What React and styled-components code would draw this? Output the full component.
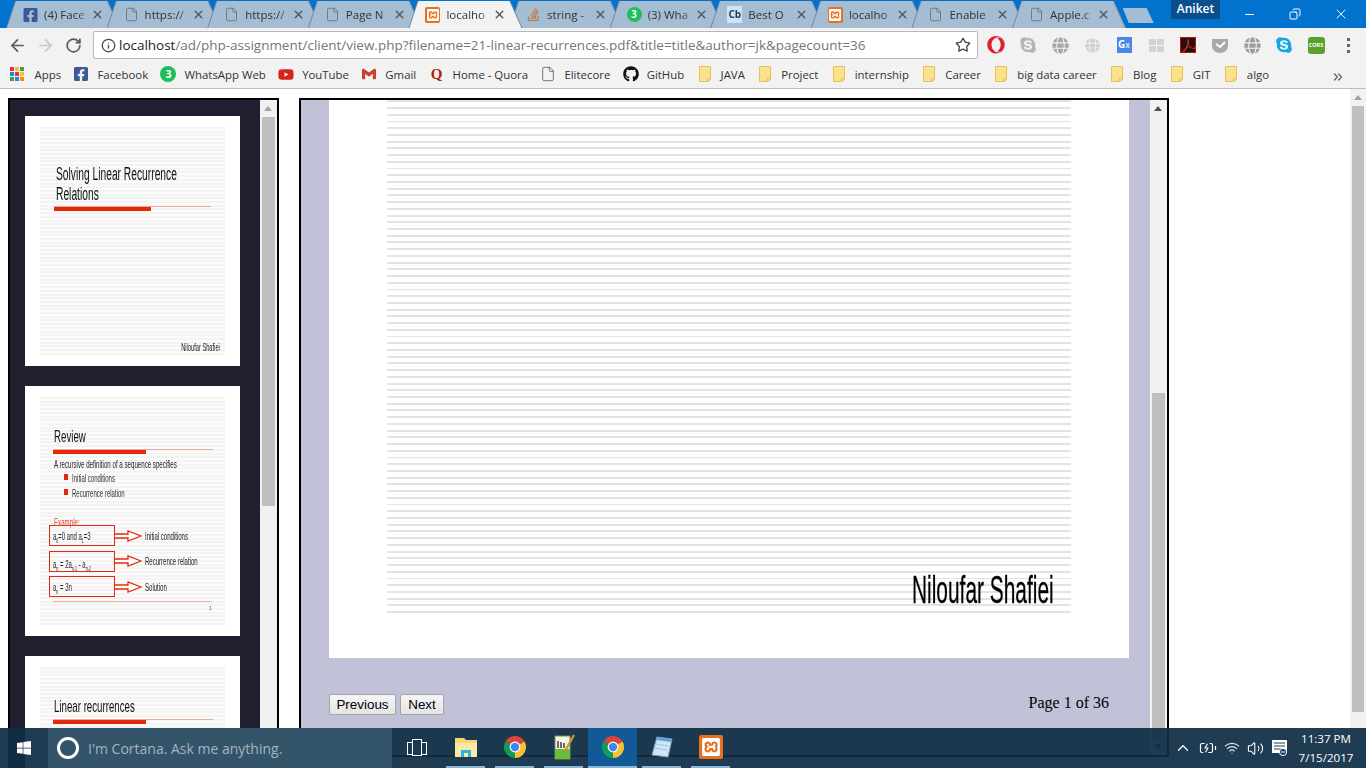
import styled, { createGlobalStyle } from 'styled-components';
import { ArrowLeft, ArrowRight, RotateCw, Info, Star, X, File, ChevronUp, ChevronsRight, Wifi, Volume2, Minus, Copy, BatteryCharging } from 'lucide-react';
import { FaFacebookSquare, FaStackOverflow, FaYoutube, FaGithub, FaOpera, FaSkype, FaGlobe, FaWindows, FaThLarge } from 'react-icons/fa';
import { SiXampp, SiAdobeacrobatreader, SiGmail } from 'react-icons/si';

const UI_FONT = '"Open Sans", "Noto Sans", sans-serif';

const GlobalStyle = createGlobalStyle`
	html, body {
		margin: 0;
		overflow: hidden;
		background: #fff;
	}
	* {
		box-sizing: border-box;
	}
`;

const Screen = styled.div`
	position: relative;
	width: 1366px;
	height: 768px;
	overflow: hidden;
	background: #fff;
	font-family: ${UI_FONT};
`;

// Tab strip
const TabStrip = styled.div`
	position: relative;
	display: flex;
	align-items: flex-end;
	height: 28px;
	padding-left: 7px;
	background: #0173cf;
`;

const TabShape = styled.div`
	position: relative;
	z-index: ${(p) => (p.$active ? 2 : 1)};
	width: 112px;
	margin-right: -11.4px;
	filter: drop-shadow(1px 0 0 #70869b) drop-shadow(-1px 0 0 #70869b);
`;

const Tab = styled.div`
	display: flex;
	align-items: center;
	height: 27px;
	padding-left: 16px;
	background: ${(p) => (p.$active ? '#f2f2f2' : '#a4bdd3')};
	clip-path: polygon(9px 0, 100px 0, 112px 100%, 0 100%);
`;

const TabIcon = styled.span`
	display: flex;
	align-items: center;
	justify-content: center;
	width: 15px;
	height: 16px;
	margin-right: 6px;
`;

const TabTitle = styled.span`
	width: 43px;
	margin-right: 4px;
	font-size: 11.5px;
	color: #333;
	white-space: nowrap;
	mask-image: linear-gradient(to right, #000 78%, rgba(0, 0, 0, 0.25) 100%);
`;

const NewTab = styled.div`
	width: 31px;
	height: 15px;
	margin: 0 0 5px 9px;
	align-self: flex-end;
	background: #a4bdd3;
	clip-path: polygon(0 0, 24px 0, 100% 100%, 6px 100%);
`;

const Profile = styled.div`
	position: absolute;
	top: 0;
	left: 1171px;
	width: 49px;
	height: 19px;
	background: #0a4f8c;
	font-size: 12px;
	font-weight: 600;
	line-height: 18px;
	text-align: center;
	color: #fff;
`;

const WindowControls = styled.div`
	position: absolute;
	top: 6px;
	left: 1243px;
	display: flex;
	align-items: center;
	gap: 33px;
	svg:nth-child(2) {
		transform: scaleX(-1);
		margin-right: -1px;
	}
`;

// Toolbar
const Toolbar = styled.div`
	display: flex;
	align-items: center;
	height: 34px;
	padding-left: 3px;
	background: #f2f2f2;
`;

const NavButton = styled.span`
	display: flex;
	align-items: center;
	justify-content: center;
	width: 28px;
`;

const UrlBox = styled.div`
	display: flex;
	align-items: center;
	width: 885px;
	height: 28px;
	margin-left: 6px;
	padding: 0 6px 0 7px;
	background: #fff;
	border: 1px solid #b9b9b9;
	border-radius: 2px;
`;

const UrlText = styled.div`
	flex: 1;
	margin-left: 3px;
	font-size: 13.48px;
	color: #757575;
	white-space: nowrap;
	b {
		font-weight: 400;
		color: #222;
	}
`;

const Extensions = styled.div`
	display: flex;
	align-items: center;
	margin-left: 2px;
`;

const Extension = styled.span`
	display: flex;
	align-items: center;
	justify-content: center;
	width: 32px;
	height: 20px;
`;

const TranslateBadge = styled.span`
	width: 15px;
	height: 16px;
	background: #4a86e8;
	font-size: 10px;
	font-weight: 700;
	line-height: 14px;
	text-align: center;
	color: #fff;
	small {
		font-size: 8px;
		color: #ddd;
	}
`;

const AdobeBadge = styled.span`
	display: flex;
	align-items: center;
	justify-content: center;
	width: 16px;
	height: 16px;
	background: #2b0d0d;
	border: 1px solid #b3180f;
`;

const CorsBadge = styled.span`
	width: 17px;
	height: 17px;
	background: #5aa02c;
	border-radius: 3px;
	font-size: 5.5px;
	font-weight: 700;
	line-height: 17px;
	text-align: center;
	color: #fff;
`;

const MenuDots = styled.span`
	display: flex;
	flex-direction: column;
	align-items: center;
	gap: 3px;
	width: 32px;
	i {
		width: 3px;
		height: 3px;
		background: #666;
	}
`;

// Bookmarks
const BookmarkBar = styled.div`
	position: relative;
	display: flex;
	align-items: center;
	gap: 12.35px;
	height: 27px;
	padding: 0 0 2px 9.5px;
	background: #f2f2f2;
	border-bottom: 1px solid #bdbdbd;
`;

const Bookmark = styled.div`
	display: flex;
	align-items: center;
	gap: 8px;
	font-size: 11.4px;
	color: #333;
	white-space: nowrap;
`;

const BookmarkIcon = styled.span`
	display: flex;
	align-items: center;
	justify-content: center;
	width: 16px;
	height: 16px;
`;

const AppsGrid = styled.span`
	display: grid;
	grid-template-columns: repeat(3, 4px);
	gap: 1px;
	width: 16px;
	margin-right: 1px;
`;

const AppDot = styled.i`
	width: 4px;
	height: 4px;
	background: ${(p) => p.$color};
`;

const MoreBookmarks = styled.span`
	position: absolute;
	top: 5px;
	left: 1331px;
`;

const QuoraMark = styled.span`
	font-family: "Liberation Serif", serif;
	font-size: 15px;
	font-weight: 700;
	line-height: 16px;
	color: #a82400;
`;

const WhatsBadge = styled.span`
	display: inline-block;
	width: ${(p) => p.$size}px;
	height: ${(p) => p.$size}px;
	background: #1ebe5d;
	border-radius: 50%;
	font-size: 10px;
	font-weight: 700;
	line-height: ${(p) => p.$size}px;
	text-align: center;
	color: #fff;
`;

const CbBadge = styled.span`
	display: inline-block;
	width: 15px;
	height: 17px;
	background: #cfe3f5;
	font-size: 10px;
	font-weight: 700;
	line-height: 17px;
	text-align: center;
	color: #1c3d5a;
`;

const XamppBadge = styled.span`
	display: flex;
	align-items: center;
	justify-content: center;
	width: ${(p) => p.$size}px;
	height: ${(p) => p.$size}px;
	background: #e8701e;
	border-radius: 2px;
`;

// Page body
const Page = styled.div`
	display: flex;
	height: 679px;
`;

const Frames = styled.div`
	display: flex;
	flex: 1;
	gap: 20px;
	padding: 9px 0 0 8px;
`;

const ThumbFrame = styled.div`
	display: flex;
	flex-shrink: 0;
	width: 271px;
	height: 670px;
	border: solid #000;
	border-width: 2px 2px 0;
`;

const Thumbs = styled.div`
	display: flex;
	flex: 1;
	flex-direction: column;
	gap: 20px;
	padding: 16px 0 0 15px;
	overflow: hidden;
	background: #1f1f2f;
`;

const Slide = styled.div`
	flex-shrink: 0;
	width: 215px;
	height: 250px;
	padding: 11px 15px;
	background: #fff;
`;

const SlideLines = styled.div`
	display: flex;
	flex-direction: column;
	align-items: flex-start;
	height: 228px;
	padding-left: 14px;
	background: repeating-linear-gradient(to bottom, #f3f3f3 0 2px, #fbfbfb 2px 3.7px);
	filter: blur(0.25px);
`;

const Squeezed = styled.span`
	display: inline-block;
	white-space: nowrap;
	transform: scaleX(0.57);
	transform-origin: ${(p) => p.$origin || 'left'} center;
	sub {
		font-size: 60%;
		line-height: 0;
	}
`;

const SlideTitle = styled.div`
	height: 20px;
	margin: ${(p) => p.$top || 0}px 0 0 ${(p) => p.$left || 0}px;
	font-family: "Liberation Sans", Arial, sans-serif;
	font-size: ${(p) => p.$size || 18}px;
	line-height: 20px;
	color: #111;
`;

const Rule = styled.div`
	position: relative;
	flex-shrink: 0;
	width: ${(p) => p.$width}px;
	height: 5px;
	margin: 2px 0 0 ${(p) => p.$left || 0}px;
	border-top: 1px solid #eea99b;
	&::after {
		content: '';
		position: absolute;
		top: 0;
		left: 0;
		width: ${(p) => p.$red}px;
		height: 4px;
		background: #e3290c;
	}
`;

const Author = styled.div`
	align-self: flex-end;
	margin: auto 5px 1px 0;
	font-family: "Liberation Sans", Arial, sans-serif;
	font-size: 10px;
	line-height: 12px;
	color: #222;
`;

const SlideBody = styled.div`
	height: 12px;
	margin-top: 4px;
	font-family: "Liberation Sans", Arial, sans-serif;
	font-size: 10.8px;
	line-height: 12px;
	color: #222;
`;

const Bullet = styled.div`
	position: relative;
	height: 15px;
	margin-left: 18px;
	padding-top: 1px;
	font-family: "Liberation Sans", Arial, sans-serif;
	font-size: 10.6px;
	line-height: 14px;
	color: #333;
	&::before {
		content: '';
		position: absolute;
		top: 4px;
		left: -8px;
		width: 3.5px;
		height: 6px;
		background: #e3290c;
	}
`;

const ExampleLabel = styled.div`
	height: 12px;
	margin-top: 16px;
	font-family: "Liberation Sans", Arial, sans-serif;
	font-size: 10.8px;
	line-height: 12px;
	color: #e8452a;
`;

const Diagram = styled.div`
	display: flex;
	flex-direction: column;
	gap: 4.5px;
	margin: -3px 0 0 -5px;
`;

const DiagramRow = styled.div`
	display: flex;
	align-items: center;
`;

const FormulaBox = styled.div`
	display: flex;
	align-items: ${(p) => (p.$low ? 'flex-end' : 'center')};
	width: 66px;
	height: 21px;
	padding: 0 0 0 3px;
	border: 1.4px solid #e3290c;
	font-family: "Liberation Sans", Arial, sans-serif;
	font-size: 10.5px;
	line-height: 14px;
	color: #222;
`;

const DiagramLabel = styled.div`
	margin-left: 3px;
	font-family: "Liberation Sans", Arial, sans-serif;
	font-size: 10.6px;
	color: #222;
`;

const FootRule = styled.div`
	flex-shrink: 0;
	width: 159px;
	height: 1px;
	margin: 4px 0 0 -1px;
	background: #efb5a9;
`;

const SlideNumber = styled.div`
	margin: 2px 0 0 155px;
	font-family: "Liberation Sans", Arial, sans-serif;
	font-size: 5px;
	line-height: 8px;
	color: #555;
`;

// Scrollbars
const Scrollbar = styled.div`
	display: flex;
	flex-direction: column;
	flex-shrink: 0;
	width: 17px;
	background: #f1f1f1;
`;

const PageScrollbar = styled(Scrollbar)`
	width: 16px;
`;

const ArrowUp = styled.div`
	position: relative;
	flex-shrink: 0;
	height: 17px;
	&::after {
		content: '';
		position: absolute;
		top: 6px;
		left: 4px;
		border: 4px solid transparent;
		border-top: 0;
		border-bottom: 5px solid ${(p) => (p.$dark ? '#505050' : '#a3a3a3')};
	}
`;

const ArrowDown = styled.div`
	position: relative;
	flex-shrink: 0;
	height: 17px;
	&::after {
		content: '';
		position: absolute;
		top: 6px;
		left: 4px;
		border: 4px solid transparent;
		border-bottom: 0;
		border-top: 5px solid #505050;
	}
`;

const ScrollTrack = styled.div`
	flex: 1;
	padding: 0 2px;
	overflow: hidden;
`;

const ScrollThumb = styled.div`
	height: ${(p) => p.$height}px;
	margin-top: ${(p) => p.$top}px;
	background: #bfbfbf;
`;

// Viewer
const ViewerFrame = styled.div`
	display: flex;
	flex-shrink: 0;
	width: 870px;
	height: 659px;
	border: 2px solid #000;
`;

const Viewer = styled.div`
	flex: 1;
	padding: 0 21px 0 28px;
	background: #c1c1d7;
`;

const PdfPage = styled.div`
	width: 800px;
	height: 558px;
	padding: 0 58px;
	background: #fff;
`;

const PdfLines = styled.div`
	display: flex;
	align-items: flex-end;
	justify-content: flex-end;
	height: 512.5px;
	padding: 0 17px 5px 0;
	background: repeating-linear-gradient(to top, #e3e3e3 0 1.9px, #fff 1.9px 6.72px);
`;

const PdfAuthor = styled.div`
	font-family: "Liberation Sans", Arial, sans-serif;
	font-size: 38px;
	line-height: 36px;
	color: #000;
	white-space: nowrap;
	-webkit-text-stroke: 0.3px #000;
	transform: scaleX(0.55);
	transform-origin: right center;
`;

const Pager = styled.div`
	display: flex;
	align-items: flex-start;
	justify-content: space-between;
	margin-top: 36px;
	padding-right: 20px;
`;

const PagerButtons = styled.div`
	display: flex;
	gap: 4px;
`;

const PagerButton = styled.button`
	width: ${(p) => p.$width}px;
	height: 21px;
	padding: 0;
	background: linear-gradient(#f6f6f6, #e4e4e4);
	border: 1px solid #a5a5a5;
	border-radius: 2px;
	font-family: "Liberation Sans", Arial, sans-serif;
	font-size: 13.4px;
	line-height: 17px;
	color: #000;
`;

const PageCount = styled.div`
	font-family: "Liberation Serif", "Times New Roman", serif;
	font-size: 16px;
	line-height: 18px;
	color: #000;
`;

// Windows taskbar, sits over the bottom of the page
const Taskbar = styled.div`
	position: absolute;
	left: 0;
	right: 0;
	bottom: 0;
	display: flex;
	align-items: stretch;
	height: 40px;
	background: rgba(15, 45, 69, 0.93);
`;

const StartButton = styled.div`
	display: flex;
	align-items: center;
	justify-content: center;
	width: 48px;
`;

const SearchBox = styled.div`
	display: flex;
	align-items: center;
	gap: 9px;
	width: 344px;
	padding-left: 9px;
	background: #34546a;
	font-size: 14px;
	color: #a3b5c0;
`;

const CortanaRing = styled.span`
	width: 22px;
	height: 22px;
	border: 3px solid #fff;
	border-radius: 50%;
`;

const TaskItem = styled.div`
	position: relative;
	display: flex;
	align-items: center;
	justify-content: center;
	width: 49px;
	padding-bottom: 2px;
	background: ${(p) => (p.$active ? '#115a95' : 'transparent')};
	&::after {
		content: '';
		display: ${(p) => (p.$running ? 'block' : 'none')};
		position: absolute;
		left: ${(p) => (p.$active ? 0 : 5)}px;
		right: ${(p) => (p.$active ? 0 : 5)}px;
		bottom: 0;
		height: 2px;
		background: #8ab6dc;
	}
`;

const TaskView = styled.span`
	position: relative;
	width: 10px;
	height: 17px;
	border: 1px solid #fff;
	&::before,
	&::after {
		content: '';
		position: absolute;
		top: 2px;
		width: 4px;
		height: 11px;
		border: 1px solid #fff;
	}
	&::before {
		left: -6px;
		border-right: 0;
	}
	&::after {
		right: -6px;
		border-left: 0;
	}
`;

const Tray = styled.div`
	display: flex;
	align-items: center;
	gap: 7px;
	margin-left: auto;
`;

const Clock = styled.div`
	display: flex;
	flex-direction: column;
	align-items: center;
	justify-content: center;
	width: 74px;
	margin-left: 4px;
	padding-right: 6px;
	font-size: 11.6px;
	line-height: 19px;
	color: #fff;
`;

// Small logos
const Chrome = ({ size = 24 }) => (
	<svg width={size} height={size} viewBox="0 0 24 24">
		<path d="M12 12 L2.47 6.5 A11 11 0 0 1 21.53 6.5Z" fill="#db4437" />
		<path d="M12 12 L21.53 6.5 A11 11 0 0 1 12 23Z" fill="#fbc02d" />
		<path d="M12 12 L12 23 A11 11 0 0 1 2.47 6.5Z" fill="#0f9d58" />
		<circle cx="12" cy="12" r="5.4" fill="#fff" />
		<circle cx="12" cy="12" r="4.2" fill="#4285f4" />
	</svg>
);

const Folder = () => (
	<svg width="12" height="16" viewBox="0 0 12 16">
		<path d="M.5.5h11v13l-2 2h-9z" fill="#fde08a" stroke="#e0c060" />
		<path d="M8.5 15.5v-3h3" fill="none" stroke="#e0c060" />
	</svg>
);

const Explorer = () => (
	<svg width="24" height="24" viewBox="0 0 24 24">
		<path d="M1 3h9l2 2h11v17H1z" fill="#f7d774" />
		<path d="M1 8h22v14H1z" fill="#fbe9a6" />
		<path d="M7 22v-7h10v7h-3v-4h-4v4z" fill="#25b6e8" />
	</svg>
);

const NotepadPlus = () => (
	<svg width="24" height="26" viewBox="0 0 24 26">
		<path d="M3 2h15v23H3z" fill="#f3f7e6" stroke="#7a8a60" />
		<path d="M3 15h15v10H3z" fill="#6dbb3a" />
		<path d="M6 7v7M9 8v6M12 9v5" stroke="#333" strokeWidth="1.4" />
		<path d="M22 1L13 17" stroke="#c9962c" strokeWidth="2.4" />
	</svg>
);

const Notepad = () => (
	<svg width="24" height="24" viewBox="0 0 24 24">
		<path d="M7 2l15 2-4 18L2 20z" fill="#cfe6f5" stroke="#7aa4c0" />
		<path d="M7 2l15 2-1 3L6 5z" fill="#5da7d8" />
		<path d="M6 9l12 2M5 13l12 2" stroke="#9cc0d8" />
	</svg>
);

const Pocket = () => (
	<svg width="18" height="18" viewBox="0 0 18 18">
		<path d="M1 3h16v7a8 7 0 0 1-16 0z" fill="#a9a9a9" />
		<path d="M5 8l4 3 5-5" fill="none" stroke="#fff" strokeWidth="2" />
	</svg>
);

const NoticeIcon = () => (
	<svg width="17" height="18" viewBox="0 0 17 18">
		<path d="M1 1h15v13H1z" fill="#fff" />
		<path d="M3 4h11M3 7h11M3 10h7" stroke="#1f3d5a" />
		<circle cx="12" cy="13" r="3.6" fill="#1f3d5a" stroke="#fff" />
		<path d="M10 13h4" stroke="#fff" />
	</svg>
);

const APP_COLORS = ['#e53935', '#fbc02d', '#43a047', '#1e88e5', '#e53935', '#fbc02d', '#43a047', '#1e88e5', '#fb8c00'];

const pageIcon = <File size={15} color="#666" strokeWidth={1.2} />;
const xamppIcon = <XamppBadge $size={16}><SiXampp size={12} color="#fff" /></XamppBadge>;

// Titles are what the narrow tabs leave visible
const TABS = [
	{ title: '(4) Face', icon: <FaFacebookSquare size={16} color="#3b5998" /> },
	{ title: 'https://', icon: pageIcon },
	{ title: 'https://', icon: pageIcon },
	{ title: 'Page N', icon: pageIcon },
	{ title: 'localho', active: true, icon: xamppIcon },
	{ title: 'string -', icon: <FaStackOverflow size={15} color="#c8753a" /> },
	{ title: '(3) Wha', icon: <WhatsBadge $size={15}>3</WhatsBadge> },
	{ title: 'Best O', icon: <CbBadge>Cb</CbBadge> },
	{ title: 'localho', icon: xamppIcon },
	{ title: 'Enable', icon: pageIcon },
	{ title: 'Apple.c', icon: pageIcon },
];

const EXTENSIONS = [
	<FaOpera size={18} color="#e0202c" />,
	<FaSkype size={18} color="#b5b5b5" />,
	<FaGlobe size={17} color="#a8a8a8" />,
	<FaGlobe size={15} color="#cfcfcf" />,
	<TranslateBadge>G<small>x</small></TranslateBadge>,
	<FaThLarge size={15} color="#d2d2d2" />,
	<AdobeBadge><SiAdobeacrobatreader size={13} color="#ee3a2a" /></AdobeBadge>,
	<Pocket />,
	<FaGlobe size={17} color="#9d9d9d" />,
	<FaSkype size={18} color="#12a5e8" />,
	<CorsBadge>CORS</CorsBadge>,
];

const BOOKMARKS = [
	{ label: 'Facebook', icon: <FaFacebookSquare size={16} color="#3b5998" /> },
	{ label: 'WhatsApp Web', icon: <WhatsBadge $size={16}>3</WhatsBadge> },
	{ label: 'YouTube', icon: <FaYoutube size={17} color="#d9201a" /> },
	{ label: 'Gmail', icon: <SiGmail size={14} color="#c8412f" /> },
	{ label: 'Home - Quora', icon: <QuoraMark>Q</QuoraMark> },
	{ label: 'Elitecore', icon: <File size={16} color="#555" strokeWidth={1.2} /> },
	{ label: 'GitHub', icon: <FaGithub size={16} color="#111" /> },
	{ label: 'JAVA', icon: <Folder /> },
	{ label: 'Project', icon: <Folder /> },
	{ label: 'internship', icon: <Folder /> },
	{ label: 'Career', icon: <Folder /> },
	{ label: 'big data career', icon: <Folder /> },
	{ label: 'Blog', icon: <Folder /> },
	{ label: 'GIT', icon: <Folder /> },
	{ label: 'algo', icon: <Folder /> },
];

const REVIEW_ROWS = [
	{ key: 'a', content: <>a<sub>0</sub>=0 and a<sub>1</sub>=3</>, label: 'Initial conditions' },
	{ key: 'b', low: true, content: <>a<sub>n</sub> = 2a<sub>n-1</sub> - a<sub>n-2</sub></>, label: 'Recurrence relation' },
	{ key: 'c', content: <>a<sub>n</sub> = 3n</>, label: 'Solution' },
];

const App = () => {
	return (
		<Screen>
			<GlobalStyle />
			<TabStrip>
				{TABS.map((tab, i) => (
					<TabShape key={i} $active={tab.active}>
						<Tab $active={tab.active}>
							<TabIcon>{tab.icon}</TabIcon>
							<TabTitle>{tab.title}</TabTitle>
							<X size={13} strokeWidth={2.6} color="#555" />
						</Tab>
					</TabShape>
				))}
				<NewTab />
				<Profile>Aniket</Profile>
				<WindowControls>
					<Minus size={13} color="#fff" />
					<Copy size={12} color="#fff" />
					<X size={16} color="#fff" strokeWidth={1.4} />
				</WindowControls>
			</TabStrip>

			<Toolbar>
				<NavButton><ArrowLeft size={19} color="#5a5a5a" strokeWidth={2.2} /></NavButton>
				<NavButton><ArrowRight size={19} color="#c8c8c8" strokeWidth={2.2} /></NavButton>
				<NavButton><RotateCw size={17} color="#5a5a5a" strokeWidth={2.4} /></NavButton>
				<UrlBox>
					<Info size={15} color="#444" />
					<UrlText>
						<b>localhost</b>/ad/php-assignment/client/view.php?filename=21-linear-recurrences.pdf&amp;title=title&amp;author=jk&amp;pagecount=36
					</UrlText>
					<Star size={16} color="#444" strokeWidth={2} />
				</UrlBox>
				<Extensions>
					{EXTENSIONS.map((icon, i) => (
						<Extension key={i}>{icon}</Extension>
					))}
					<MenuDots><i /><i /><i /></MenuDots>
				</Extensions>
			</Toolbar>

			<BookmarkBar>
				<Bookmark>
					<AppsGrid>
						{APP_COLORS.map((color, i) => (
							<AppDot key={i} $color={color} />
						))}
					</AppsGrid>
					Apps
				</Bookmark>
				{BOOKMARKS.map((item) => (
					<Bookmark key={item.label}>
						<BookmarkIcon>{item.icon}</BookmarkIcon>
						{item.label}
					</Bookmark>
				))}
				<MoreBookmarks><ChevronsRight size={14} color="#666" strokeWidth={2.4} /></MoreBookmarks>
			</BookmarkBar>

			<Page>
				<Frames>
					<ThumbFrame>
						<Thumbs>
							<Slide>
								<SlideLines>
									<SlideTitle $top={37} $left={2}><Squeezed>Solving Linear Recurrence</Squeezed></SlideTitle>
									<SlideTitle $left={2}><Squeezed>Relations</Squeezed></SlideTitle>
									<Rule $width={157} $red={97} />
									<Author><Squeezed $origin="right">Niloufar Shafiei</Squeezed></Author>
								</SlideLines>
							</Slide>
							<Slide>
								<SlideLines>
									<SlideTitle $top={30} $size={17}><Squeezed>Review</Squeezed></SlideTitle>
									<Rule $width={160} $red={93} $left={-1} />
									<SlideBody><Squeezed>A recursive definition of a sequence specifies</Squeezed></SlideBody>
									<Bullet><Squeezed>Initial conditions</Squeezed></Bullet>
									<Bullet><Squeezed>Recurrence relation</Squeezed></Bullet>
									<ExampleLabel><Squeezed>Example:</Squeezed></ExampleLabel>
									<Diagram>
										{REVIEW_ROWS.map((row) => (
											<DiagramRow key={row.key}>
												<FormulaBox $low={row.low}><Squeezed>{row.content}</Squeezed></FormulaBox>
												<svg width="27" height="12" viewBox="0 0 27 12">
													<path d="M0 4h13V1l13 5-13 5V8H0" fill="#fff" stroke="#e3290c" strokeWidth="1.3" />
												</svg>
												<DiagramLabel><Squeezed>{row.label}</Squeezed></DiagramLabel>
											</DiagramRow>
										))}
									</Diagram>
									<FootRule />
									<SlideNumber>1</SlideNumber>
								</SlideLines>
							</Slide>
							<Slide>
								<SlideLines>
									<SlideTitle $top={30} $size={17}><Squeezed>Linear recurrences</Squeezed></SlideTitle>
									<Rule $width={160} $red={93} $left={-1} />
								</SlideLines>
							</Slide>
						</Thumbs>
						<Scrollbar>
							<ArrowUp />
							<ScrollTrack>
								<ScrollThumb $top={0} $height={389} />
							</ScrollTrack>
						</Scrollbar>
					</ThumbFrame>

					<ViewerFrame>
						<Viewer>
							<PdfPage>
								<PdfLines>
									<PdfAuthor>Niloufar Shafiei</PdfAuthor>
								</PdfLines>
							</PdfPage>
							<Pager>
								<PagerButtons>
									<PagerButton $width={67}>Previous</PagerButton>
									<PagerButton $width={44}>Next</PagerButton>
								</PagerButtons>
								<PageCount>Page 1 of 36</PageCount>
							</Pager>
						</Viewer>
						<Scrollbar>
							<ArrowUp $dark />
							<ScrollTrack>
								<ScrollThumb $top={276} $height={345} />
							</ScrollTrack>
							<ArrowDown />
						</Scrollbar>
					</ViewerFrame>
				</Frames>
				<PageScrollbar>
					<ArrowUp />
					<ScrollTrack>
						<ScrollThumb $top={0} $height={606} />
					</ScrollTrack>
				</PageScrollbar>
			</Page>

			<Taskbar>
				<StartButton><FaWindows size={16} color="#fff" /></StartButton>
				<SearchBox>
					<CortanaRing />
					I'm Cortana. Ask me anything.
				</SearchBox>
				<TaskItem>
					<TaskView />
				</TaskItem>
				<TaskItem $running><Explorer /></TaskItem>
				<TaskItem $running><Chrome /></TaskItem>
				<TaskItem $running><NotepadPlus /></TaskItem>
				<TaskItem $running $active><Chrome /></TaskItem>
				<TaskItem $running><Notepad /></TaskItem>
				<TaskItem $running>
					<XamppBadge $size={24}><SiXampp size={18} color="#fff" /></XamppBadge>
				</TaskItem>
				<Tray>
					<ChevronUp size={18} color="#fff" strokeWidth={1.6} />
					<BatteryCharging size={18} color="#fff" strokeWidth={1.6} />
					<Wifi size={16} color="#dfe6ec" strokeWidth={1.8} />
					<Volume2 size={17} color="#fff" strokeWidth={1.5} />
					<NoticeIcon />
				</Tray>
				<Clock>
					<span>11:37 PM</span>
					<span>7/15/2017</span>
				</Clock>
			</Taskbar>
		</Screen>
	);
};

export default App;
